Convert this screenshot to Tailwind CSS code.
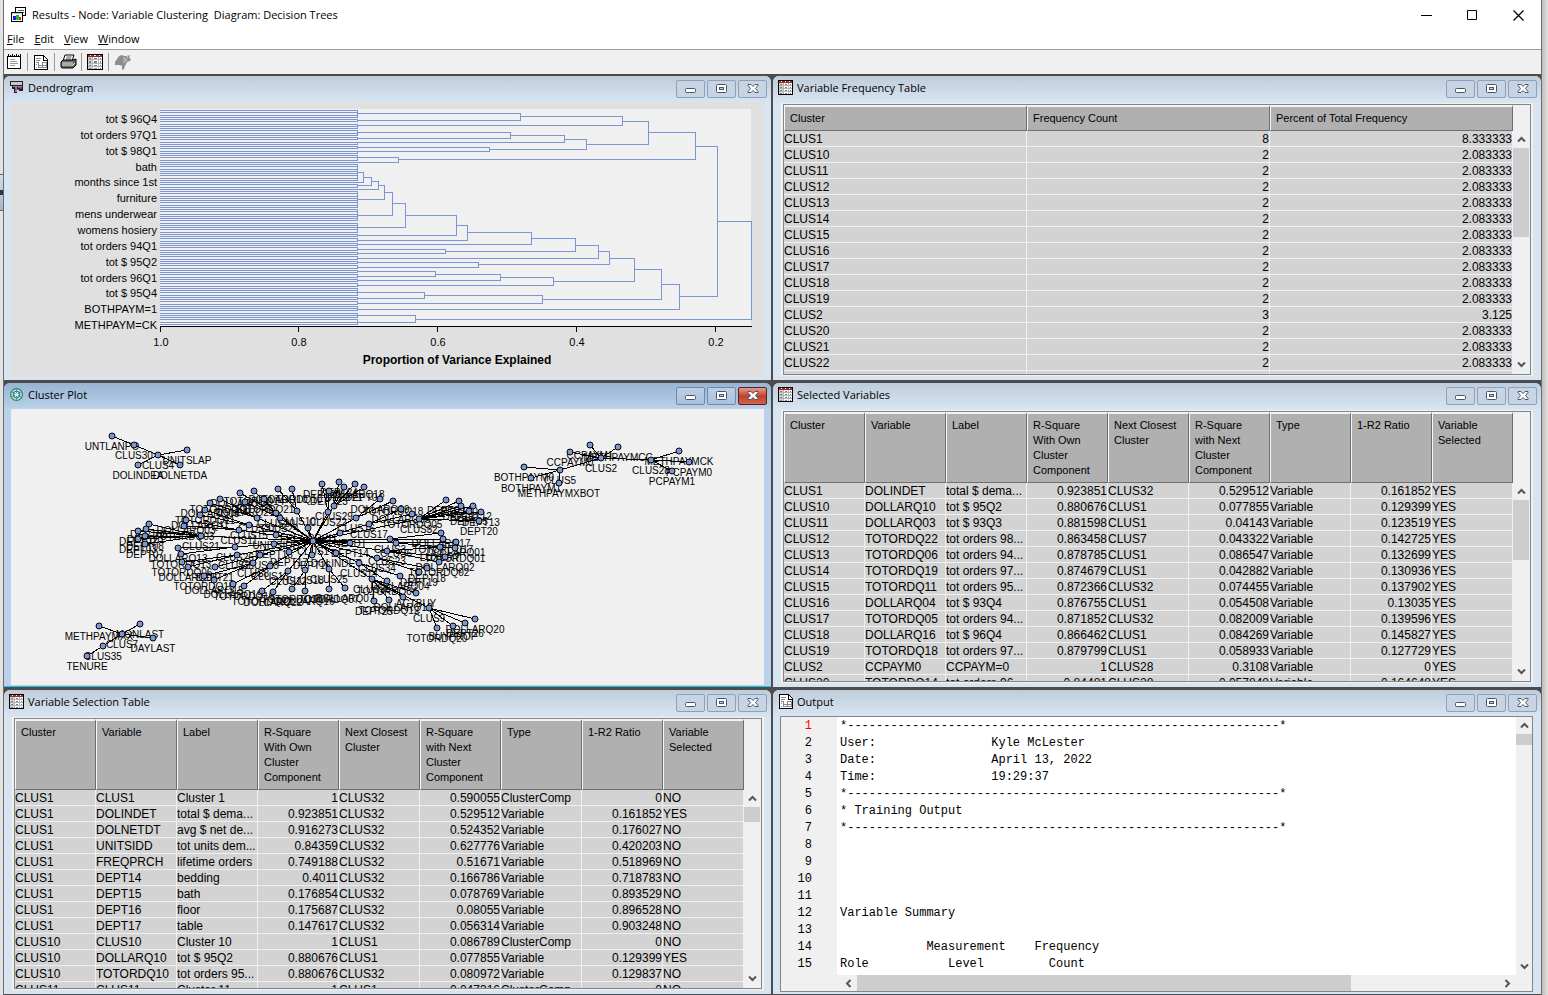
<!DOCTYPE html>
<html lang="en">
<head>
<meta charset="utf-8">
<title>Results - Node: Variable Clustering  Diagram: Decision Trees</title>
<script src="https://cdn.jsdelivr.net/npm/@tailwindcss/browser@4"></script>
</head>
<body class="h-screen overflow-hidden flex bg-[#dcdcdc] text-black font-['Open_Sans','Noto_Sans',sans-serif] text-[11px]">

<svg width="0" height="0" class="hidden" aria-hidden="true">
  <symbol id="i-table" viewBox="0 0 15 15"><g shape-rendering="crispEdges">
    <rect width="15" height="15" fill="#000"/><rect x="1" y="1" width="13" height="13" fill="#fff"/>
    <path d="M1 1h13v2H1z" fill="#a02828"/><path d="M3 1h1v1H3zM7 1h1v1H7zM11 1h1v1h-1z" fill="#fff"/>
    <path d="M1 3h4v11H1z" fill="#d4d4d4"/>
    <path d="M5 3h1v11H5zM10 3h1v11h-1zM1 5h13v1H1zM1 8h13v1H1zM1 11h13v1H1z" fill="#b4b4b4"/>
    <path d="M2 4.500h2M7 4.500h2M12 4.500h1M2 7.500h2M7 7.500h2M12 7.500h1M2 10.500h2M7 10.500h2M12 10.500h1M2 13.500h2M7 13.500h2M12 13.500h1" stroke="#808080"/></g></symbol>
  <symbol id="i-dendro" viewBox="-1 -1 15 15"><g shape-rendering="crispEdges">
    <rect width="13" height="5" fill="#222"/><rect x="1" y="1" width="11" height="3" fill="#c8c8c8"/>
    <path d="M2 5h11v5H9V8H7v4H4V8H2z" fill="#222"/><path d="M3 5h9v1H3zM5 6h2v5H5z" fill="#888"/><path d="M8 6h4v1H8zM7 8h2v1H7zM5 7h1v2H5zM10 7h1v1h-1z" fill="#b030b0"/></g></symbol>
  <symbol id="i-output" viewBox="0 0 14 15"><g shape-rendering="crispEdges">
    <path d="M0 0h10v1h1v1h1v1h1v1h1v11H0z" fill="#000"/><path d="M1 1h8v5h4v8H1z" fill="#fff"/><path d="M10 2h1v1h1v1h1v1h-3z" fill="#fff"/>
    <path d="M2 3.500h5M2 5.500h4M2 7.500h3M8 7.500h5M2 9.500h1M2 12.500h1" stroke="#888"/><path d="M4 8h1v5H4zM8 8h1v5H8zM12 8h1v5h-1zM5 10h7v1H5zM5 12h7v1H5z" fill="#888"/></g></symbol>
  <symbol id="i-cluster" viewBox="0 0 14 14"><circle cx="7" cy="7" r="5.500" fill="#cfe4f2" stroke="#189a30" stroke-width="1.200"/><circle cx="7" cy="7" r="3" fill="none" stroke="#3c62b8"/><path d="M7 2v10M2.500 4.500l9 5M2.500 9.500l9-5" stroke="#3c8a9a" stroke-width=".8"/><circle cx="7" cy="7" r="1.500" fill="#d8e8f8"/></symbol>
  <symbol id="i-min" viewBox="0 0 12 12"><rect x=".5" y="5.500" width="10" height="4" rx="1" fill="#fff" stroke="#4a5468"/></symbol>
  <symbol id="i-max" viewBox="0 0 12 12"><rect x=".5" y="1.500" width="10" height="8" rx="1" fill="#fff" stroke="#4a5468"/><rect x="3.500" y="4.500" width="4" height="2" fill="#c5d1e2" stroke="#4a5468"/></symbol>
  <symbol id="i-close" viewBox="0 0 12 12"><path d="M1 1.500h3l2 2 2-2h3v1L8.500 5.500l2.500 3v1H8l-2-2-2 2H1v-1l2.500-3L1 2.500z" fill="#fff" stroke="#4a5468"/></symbol>
  <symbol id="i-up" viewBox="0 0 9 9"><path d="M1 6.500l3.500-3.500L8 6.500" fill="none" stroke="#555" stroke-width="2"/></symbol>
  <symbol id="i-down" viewBox="0 0 9 9"><path d="M1 2.500L4.500 6 8 2.500" fill="none" stroke="#555" stroke-width="2"/></symbol>
</svg>

<div class="w-[3px] shrink-0 flex flex-col bg-[#e3e3e3]">
  <div class="h-[175px] border-b border-[#666]"></div>
  <div class="h-[36px] bg-linear-to-b from-[#d0deec] to-[#9fb6cd] border-b border-[#666] flex items-center"><span class="w-[3px] h-[5px] bg-[#333]"></span></div>
</div>

<div class="flex-1 min-w-0 flex flex-col border-x border-[#6c6c6c] bg-white">
  <header class="h-[30px] shrink-0 flex items-center">
    <svg class="ml-[7px] w-[16px] h-[16px]" viewBox="0 0 16 16" shape-rendering="crispEdges"><path d="M4 0h11v9H4z" fill="#000"/><path d="M5 1h9v7H5z" fill="#fff"/><path d="M7 3h6M7 5h6" stroke="#555"/><path d="M0 5h12v10H0z" fill="#000"/><path d="M1 6h10v1H1z" fill="#ccc"/><path d="M1 7h10v7H1z" fill="#fff"/><path d="M2 9h3v4H2z" fill="#1818e8"/><path d="M5 8h3v5H5z" fill="#18c030"/><path d="M8 10h2v3H8z" fill="#e02020"/></svg>
    <h1 class="ml-[5px] whitespace-pre">Results - Node: Variable Clustering  Diagram: Decision Trees</h1>
    <div class="ml-auto flex">
      <button aria-label="Minimize" class="w-[46px] h-[28px] flex items-center justify-center"><svg class="w-[11px] h-[11px]" viewBox="0 0 11 11"><path d="M0 5.500h11" stroke="#000"/></svg></button>
      <button aria-label="Maximize" class="w-[46px] h-[28px] flex items-center justify-center"><svg class="w-[11px] h-[11px]" viewBox="0 0 11 11"><path d="M.5.5h9v9H.5z" fill="none" stroke="#000"/></svg></button>
      <button aria-label="Close" class="w-[46px] h-[28px] flex items-center justify-center"><svg class="w-[11px] h-[11px]" viewBox="0 0 11 11"><path d="M.5.5l10 10M10.500.5l-10 10" fill="none" stroke="#000" stroke-width="1.200"/></svg></button>
    </div>
  </header>
  <nav class="h-[20px] shrink-0 flex items-center gap-[10px] pl-[3px] border-b border-[#9a9a9a]">
    <button><u>F</u>ile</button><button><u>E</u>dit</button><button><u>V</u>iew</button><button><u>W</u>indow</button>
  </nav>
  <div class="h-[24px] shrink-0 flex items-center bg-[#f0f0f0] pl-[3px]">
    <button aria-label="Properties" class="w-[20px]"><svg class="w-[15px] h-[16px]" viewBox="0 0 15 16" shape-rendering="crispEdges"><path d="M0 2h14v13H0z" fill="#000"/><path d="M1 3h12v11H1z" fill="#fff"/><path d="M1 0h1v3H1zM3 1h1v2H3zM5 0h1v3H5zM7 1h1v2H7zM9 0h1v3H9zM11 1h1v2h-1zM13 0h1v3h-1z" fill="#000"/><path d="M3 5.500h5M3 7.500h7M3 9.500h8M3 11.500h5" stroke="#999"/></svg></button>
    <span class="w-px h-[18px] bg-[#999] mr-[6px]"></span>
    <button aria-label="Output" class="w-[20px]"><svg class="w-[14px] h-[15px]"><use href="#i-output"/></svg></button>
    <span class="w-px h-[18px] bg-[#999] mr-[5px]"></span>
    <button aria-label="Print" class="w-[21px]"><svg class="w-[17px] h-[16px]" viewBox="0 0 17 16"><path d="M5 1h9l-2 6H3z" fill="#fff" stroke="#000"/><path d="M6.500 3h5M6 5h5" stroke="#555"/><path d="M1 8l2-2h10l3-1v6l-3 3H2l-1-1z" fill="#666" stroke="#000"/><path d="M2 9h11M2 11h11l2-2" fill="none" stroke="#eee"/><path d="M8 11.500h3" stroke="#c8b820"/></svg></button>
    <span class="w-px h-[18px] bg-[#999] mr-[5px]"></span>
    <button aria-label="Table" class="w-[21px]"><svg class="w-[16px] h-[16px]"><use href="#i-table"/></svg></button>
    <span class="w-px h-[18px] bg-[#999] mr-[6px]"></span>
    <button aria-label="Plot" disabled class="w-[20px]"><svg class="w-[16px] h-[16px]" viewBox="0 0 16 16"><path d="M4 2l3-1 2 1 3 0 3-1-1 3 2 1-1 2-3 1-1 2-1 2-1 3-2 1v-4l-2-1-5 0 0-3z" fill="#8e8e8e"/><path d="M8 4h2v3H9v2M11 5l1 2M13 1l-1 3" fill="none" stroke="#d0d0d0"/></svg></button>
  </div>

  <main class="flex-1 min-h-0 grid grid-cols-2 grid-rows-3 gap-x-px gap-y-[3px] pt-[2px] pb-px bg-[#4c4c4e]">

    <section class="win mr-px min-h-0 min-w-0 flex flex-col bg-[#d7e4f2] rounded-t-md overflow-hidden" data-title="Dendrogram" data-icon="#i-dendro">
      <div class="flex-1 min-h-0 mx-[7px] mb-[3px] bg-[#e0e0e0]">
        <svg id="dendro" class="block w-full h-full font-['Liberation_Sans',Arial,sans-serif]" viewBox="11 102 753 275"></svg>
      </div>
    </section>

    <section class="win min-h-0 min-w-0 flex flex-col bg-[#d7e4f2] rounded-t-md overflow-hidden" data-title="Variable Frequency Table" data-icon="#i-table">
      <div id="freq" class="flex-1 min-h-0 flex flex-col mx-[7px] mb-[3px] bg-[#f0f0f0] border border-[#e2e4e6] px-[2px] py-px"></div>
    </section>

    <section class="win mr-px min-h-0 min-w-0 flex flex-col bg-[#b9d1ea] rounded-t-md overflow-hidden border-b border-b-[#22c4dc]" data-title="Cluster Plot" data-icon="#i-cluster" data-active="1">
      <div class="flex-1 min-h-0 mx-[7px] mb-px bg-[#f0f0f0]">
        <svg id="plot" class="block w-full h-full font-['Liberation_Sans',Arial,sans-serif]" viewBox="11 409 753 276"></svg>
      </div>
    </section>

    <section class="win min-h-0 min-w-0 flex flex-col bg-[#d7e4f2] rounded-t-md overflow-hidden" data-title="Selected Variables" data-icon="#i-table">
      <div id="selected" class="flex-1 min-h-0 flex flex-col mx-[7px] mb-[3px] bg-[#f0f0f0] border border-[#e2e4e6] px-[2px] py-px"></div>
    </section>

    <section class="win mr-px min-h-0 min-w-0 flex flex-col bg-[#d7e4f2] rounded-t-md overflow-hidden" data-title="Variable Selection Table" data-icon="#i-table">
      <div id="selection" class="flex-1 min-h-0 flex flex-col ml-[7px] mr-[6px] mb-[3px] bg-[#f0f0f0] border border-[#e2e4e6] px-[2px] py-px"></div>
    </section>

    <section class="win min-h-0 min-w-0 flex flex-col bg-[#d7e4f2] rounded-t-md overflow-hidden" data-title="Output" data-icon="#i-output">
      <div class="flex-1 min-h-0 flex ml-[7px] mr-[8px] mb-[2px] bg-[#f0f0f0] border border-[#7f868f]">
        <pre class="w-[56px] shrink-0 pt-px pr-[25px] text-right text-[12px] leading-[17px] font-['Liberation_Mono',monospace]"><span class="text-[#ff0000]">1</span>
2
3
4
5
6
7
8
9
10
11
12
13
14
15</pre>
        <div class="flex-1 min-w-0 flex flex-col">
          <pre class="flex-1 min-h-0 overflow-hidden bg-white pt-px pl-[3px] text-[12px] leading-[17px] font-['Liberation_Mono',monospace]">*------------------------------------------------------------*
User:                Kyle McLester
Date:                April 13, 2022
Time:                19:29:37
*------------------------------------------------------------*
* Training Output
*------------------------------------------------------------*




Variable Summary

            Measurement    Frequency
Role           Level         Count</pre>
          <div class="h-[16px] shrink-0 flex items-center ml-[3px]">
            <button aria-label="Scroll left" class="w-[17px] flex justify-center"><svg class="w-[9px] h-[9px]" viewBox="0 0 9 9"><path d="M6.500 1L3 4.500 6.500 8" fill="none" stroke="#555" stroke-width="2"/></svg></button>
            <div class="flex-1 h-full"><div class="w-[77%] h-full bg-[#cdcdcd]"></div></div>
            <button aria-label="Scroll right" class="w-[17px] flex justify-center"><svg class="w-[9px] h-[9px]" viewBox="0 0 9 9"><path d="M2.500 1L6 4.500 2.500 8" fill="none" stroke="#555" stroke-width="2"/></svg></button>
          </div>
        </div>
        <div class="w-[16px] shrink-0 flex flex-col pb-[16px]">
          <button aria-label="Scroll up" class="h-[17px] flex justify-center items-center"><svg class="w-[9px] h-[9px]"><use href="#i-up"/></svg></button>
          <div class="flex-1"><div class="h-[11px] bg-[#cdcdcd]"></div></div>
          <button aria-label="Scroll down" class="h-[17px] flex justify-center items-center"><svg class="w-[9px] h-[9px]"><use href="#i-down"/></svg></button>
        </div>
      </div>
    </section>
  </main>
</div>
<div class="w-[6px] shrink-0 bg-linear-to-r from-[#bdbdbd] to-[#e0e0e0]"></div>

<script>
// Title bars
document.querySelectorAll('.win').forEach(w => {
  const on = w.dataset.active;
  const bar = on ? 'bg-linear-to-b from-[#98b4d2] to-[#b9d1ea]' : 'bg-linear-to-b from-[#bfcddb] to-[#d7e4f2]';
  const b = on ? 'bg-linear-to-b from-[#bcd0e6] to-[#a8c2de] border-[#6f87a8]' : 'bg-[#c6d4e4] border-[#8fa0bc]';
  const c = on ? 'bg-linear-to-b from-[#e09c8c] via-[#c0402c] to-[#d06450] border-[#5a2020]' : b;
  const btn = (n, i, k) => `<button aria-label="${n}" class="w-[29px] h-[18px] border rounded-[2px] flex items-center justify-center ${k}"><svg class="w-[12px] h-[12px]"><use href="${i}"/></svg></button>`;
  w.insertAdjacentHTML('afterbegin', `<div class="h-[26px] shrink-0 flex ${bar}">
    <svg class="ml-[5px] mt-[4px] w-[15px] h-[15px] shrink-0"><use href="${w.dataset.icon}"/></svg>
    <h2 class="ml-[4px] mt-[3px] leading-[18px]">${w.dataset.title}</h2>
    <div class="ml-auto mr-[4px] mt-[4px] flex gap-[2px]">${btn('Minimize', '#i-min', b)}${btn('Restore', '#i-max', b)}${btn('Close', '#i-close', c)}</div></div>`);
});

// Data tables
function grid(id, heads, rows, right, tall, thumb, label) {
  const hh = tall ? 'h-[71px]' : 'h-[26px]', sp = tall ? 'pt-[71px]' : 'pt-[26px]';
  document.getElementById(id).innerHTML = `<div class="flex-1 min-h-0 flex border border-[#7f868f] font-['Liberation_Sans',Arial,sans-serif]">
   <div class="flex-1 min-w-0 overflow-hidden"><table aria-label="${label}" class="w-full table-fixed border-separate border-spacing-0">
   <thead><tr>${heads.map(h => `<th class="${hh} pl-[5px] pt-[4px] align-top text-left text-[11px] leading-[15px] font-normal bg-[#b0b0b0] border border-t-2 border-t-[#f4f4f4] border-l-[#f8f8f8] border-r-[#6e6e6e] border-b-[#6e6e6e] whitespace-nowrap">${h}</th>`).join('')}</tr></thead>
   <tbody>${rows.map(r => `<tr>${r.map((c, i) => `<td class="h-[16px] p-0 pt-[2px] leading-[13px] text-[12px] bg-[#d3d3d3] border-r border-b border-[#f0f0f0] whitespace-nowrap ${right.includes(i) ? 'text-right' : 'text-left'}">${c}</td>`).join('')}</tr>`).join('')}</tbody></table></div>
   <div class="w-[17px] shrink-0 pr-px flex flex-col ${sp}">
    <button aria-label="Scroll up" class="h-[17px] flex justify-center items-center"><svg class="w-[9px] h-[9px]"><use href="#i-up"/></svg></button>
    <div class="flex-1"><div class="bg-[#cdcdcd]" style="height:${thumb}%"></div></div>
    <button aria-label="Scroll down" class="h-[19px] flex justify-center items-center"><svg class="w-[9px] h-[9px]"><use href="#i-down"/></svg></button>
   </div></div>`;
}
grid('freq', ['Cluster', 'Frequency Count', 'Percent of Total Frequency'],
  [1,10,11,12,13,14,15,16,17,18,19,2,20,21,22,23].map(n => ['CLUS' + n, n === 1 ? 8 : n === 2 ? 3 : 2, n === 1 ? '8.333333' : n === 2 ? '3.125' : '2.083333']),
  [1, 2], false, 43, 'Variable Frequency Table');
const heads = ['Cluster', 'Variable', 'Label', 'R-Square<br>With Own<br>Cluster<br>Component', 'Next Closest<br>Cluster', 'R-Square<br>with Next<br>Cluster<br>Component', 'Type', '1-R2 Ratio', 'Variable<br>Selected'];
const parse = s => s.trim().split('\n').map(l => l.split('|'));
grid('selected', heads, parse(`
CLUS1|DOLINDET|total $ dema...|0.923851|CLUS32|0.529512|Variable|0.161852|YES
CLUS10|DOLLARQ10|tot $ 95Q2|0.880676|CLUS1|0.077855|Variable|0.129399|YES
CLUS11|DOLLARQ03|tot $ 93Q3|0.881598|CLUS1|0.04143|Variable|0.123519|YES
CLUS12|TOTORDQ22|tot orders 98...|0.863458|CLUS7|0.043322|Variable|0.142725|YES
CLUS13|TOTORDQ06|tot orders 94...|0.878785|CLUS1|0.086547|Variable|0.132699|YES
CLUS14|TOTORDQ19|tot orders 97...|0.874679|CLUS1|0.042882|Variable|0.130936|YES
CLUS15|TOTORDQ11|tot orders 95...|0.872366|CLUS32|0.074455|Variable|0.137902|YES
CLUS16|DOLLARQ04|tot $ 93Q4|0.876755|CLUS1|0.054508|Variable|0.13035|YES
CLUS17|TOTORDQ05|tot orders 94...|0.871852|CLUS32|0.082009|Variable|0.139596|YES
CLUS18|DOLLARQ16|tot $ 96Q4|0.866462|CLUS1|0.084269|Variable|0.145827|YES
CLUS19|TOTORDQ18|tot orders 97...|0.879799|CLUS1|0.058933|Variable|0.127729|YES
CLUS2|CCPAYM0|CCPAYM=0|1|CLUS28|0.3108|Variable|0|YES
CLUS20|TOTORDQ14|tot orders 96...|0.84481|CLUS28|0.057848|Variable|0.164648|YES`), [3, 5, 7], true, 37, 'Selected Variables');
grid('selection', heads, parse(`
CLUS1|CLUS1|Cluster 1|1|CLUS32|0.590055|ClusterComp|0|NO
CLUS1|DOLINDET|total $ dema...|0.923851|CLUS32|0.529512|Variable|0.161852|YES
CLUS1|DOLNETDT|avg $ net de...|0.916273|CLUS32|0.524352|Variable|0.176027|NO
CLUS1|UNITSIDD|tot units dem...|0.84359|CLUS32|0.627776|Variable|0.420203|NO
CLUS1|FREQPRCH|lifetime orders|0.749188|CLUS32|0.51671|Variable|0.518969|NO
CLUS1|DEPT14|bedding|0.4011|CLUS32|0.166786|Variable|0.718783|NO
CLUS1|DEPT15|bath|0.176854|CLUS32|0.078769|Variable|0.893529|NO
CLUS1|DEPT16|floor|0.175687|CLUS32|0.08055|Variable|0.896528|NO
CLUS1|DEPT17|table|0.147617|CLUS32|0.056314|Variable|0.903248|NO
CLUS10|CLUS10|Cluster 10|1|CLUS1|0.086789|ClusterComp|0|NO
CLUS10|DOLLARQ10|tot $ 95Q2|0.880676|CLUS1|0.077855|Variable|0.129399|YES
CLUS10|TOTORDQ10|tot orders 95...|0.880676|CLUS32|0.080972|Variable|0.129837|NO
CLUS11|CLUS11|Cluster 11|1|CLUS1|0.047316|ClusterComp|0|NO`), [3, 5, 7], true, 9, 'Variable Selection Table');

// Dendrogram: 96 leaves joined into clusters, then merged pairwise
const leafY = i => Math.round(110 + i * 2.2526);
let d = '';
for (let i = 0; i < 96; i++) d += `M160 ${leafY(i)}.5H358`;
[[0,3],[4,5],[6,8],[9,11],[12,13],[14,15],[16,17],[18,19],[20,22],[24,31],[33,34],[36,43],[44,49],[50,54],[55,56],[57,58],[59,60],[61,62],[63,64],[65,66],[67,68],[69,70],[71,72],[73,74],[75,76],[77,78],[79,82],[83,84],[85,86],[87,89],[90,92],[93,95]]
  .forEach(([a, b]) => d += `M357.5 ${leafY(a)}V${leafY(b) + 1}`);
[[520,113,357,120,357],[622,116,520,125,357],[510,132,357,138,357],[564,135,510,142,357],[489,147,357,151,357],[586,139,564,149,489],[648,121,622,144,586],[398,157,357,162,357],[695,132,648,159,398],
 [363,172,357,182,357],[371,177,363,185,357],[378,181,371,189,357],[384,185,378,199,357],[392,192,384,215,357],[405,203,392,227,357],[456,215,405,235,357],[467,225,456,240,357],[531,232,467,244,357],[445,249,357,253,357],[575,238,531,251,445],[598,245,575,258,357],[478,262,357,267,357],[609,251,598,264,478],
 [435,271,357,276,357],[500,274,435,280,357],[553,277,500,285,357],[634,258,609,281,553],[424,292,357,298,357],[542,295,424,303,357],[661,269,634,299,542],[679,284,661,309,357],[717,146,695,296,679],[415,315,357,322,357],[751,221,717,319,415]]
  .forEach(([x, y1, x1, y2, x2]) => d += `M${x1} ${y1}.5H${x}.5V${y2}.5H${x2}`);
const names = ['tot $ 96Q4','tot orders 97Q1','tot $ 98Q1','bath','months since 1st','furniture','mens underwear','womens hosiery','tot orders 94Q1','tot $ 95Q2','tot orders 96Q1','tot $ 95Q4','BOTHPAYM=1','METHPAYM=CK'];
document.getElementById('dendro').innerHTML = `<rect x="160" y="109" width="591" height="217" fill="#f0f0f0"/>
 <path d="${d}" fill="none" stroke="#7b96d2" shape-rendering="crispEdges"/>
 <path d="M160 326.5H752${[160,298,437,576,715].map(x => `M${x}.5 326V332`).join('')}" stroke="#000" fill="none" shape-rendering="crispEdges"/>
 <g font-size="11">${names.map((n, i) => `<text x="157" y="${Math.round(123 + i * 15.85)}" text-anchor="end">${n}</text>`).join('')}
 ${['1.0','0.8','0.6','0.4','0.2'].map((n, i) => `<text x="${Math.round(160.5 + i * 138.75)}" y="346" text-anchor="middle">${n}</text>`).join('')}</g>
 <text x="457" y="364" font-size="12" font-weight="700" text-anchor="middle">Proportion of Variance Explained</text>`;

// Cluster plot: label, x, y, parent
const nodes = `CLUS4 158 455 -
CLUS30 134 445 CLUS4
UNTLANPO 112 436 CLUS30
UNITSLAP 187 450 CLUS4
DOLINDEA 138 465 CLUS4
DOLNETDA 180 465 CLUS4
CLUS7 122 634 -
METHPAYMXX 99 626 CLUS7
MONLAST 140 624 CLUS7
DAYLAST 153 638 CLUS7
CLUS35 103 646 CLUS7
TENURE 87 656 CLUS35
CLUS2 601 458 -
CLUS5 560 470 CLUS2
BOTHPAYM0 524 467 CLUS5
BOTHPAYM1 531 478 CLUS5
METHPAYMXBOT 559 483 CLUS5
CCPAYM0 570 452 CLUS2
CCPAYM1 590 445 CLUS2
METHPAYMCC 618 447 CLUS2
CLUS28 651 460 CLUS2
METHPAYMCK 679 451 CLUS28
PCPAYM0 689 462 CLUS28
PCPAYM1 672 471 CLUS28
CLUS1 313 541 -
CLUS21 201 536 CLUS1
DEPT06 149 524 CLUS21
DEPT01 146 529 CLUS21
DEPT02 138 531 CLUS21
DEPT08 145 536 CLUS21
DEPT03 138 539 CLUS21
DEPT07 145 544 CLUS21
CLUS11 239 530 CLUS1
TOTORDQ03 184 526 CLUS11
DOLLARQ03 186 520 CLUS11
CLUS15 249 525 CLUS1
DOLLARQ11 200 515 CLUS15
TOTORDQ11 205 510 CLUS15
CLUS31 257 518 CLUS1
DOLLARQ08 210 503 CLUS31
TOTORDQ08 220 499 CLUS31
CLUS20 276 513 CLUS1
DOLLARQ14 240 493 CLUS20
TOTORDQ14 254 491 CLUS20
CLUS24 280 518 CLUS1
DOLLARQ21 245 502 CLUS24
TOTORDQ21 264 499 CLUS24
CLUS10 297 511 CLUS1
DOLLARQ10 278 489 CLUS10
TOTORDQ10 292 489 CLUS10
CLUS22 328 512 CLUS1
DEPT22 322 484 CLUS22
DEPT23 329 491 CLUS22
CLUS29 334 506 CLUS1
DEPT24 339 482 CLUS29
DEPT21 344 487 CLUS29
DOLLARQ18 355 484 CLUS29
DEPT04 364 487 CLUS29
FREQPRCH 308 528 CLUS1
CLUS16 356 518 CLUS1
DOLLARQ09 380 499 CLUS16
TOTORDQ18 393 501 CLUS16
CLUS17 369 524 CLUS1
DOLLARQ05 401 509 CLUS17
TOTORDQ05 412 514 CLUS17
CLUS32 419 519 CLUS1
DEPT09 446 500 CLUS32
DEPT10 459 501 CLUS32
DEPT11 461 506 CLUS32
DEPT12 473 506 CLUS32
DEPT05 469 511 CLUS32
DEPT13 481 512 CLUS32
DEPT20 479 521 CLUS32
UNITSIDD 276 535 CLUS1
DOLNETDT 340 533 CLUS1
DEPT14 350 543 CLUS1
DOLINDET 336 553 CLUS1
DEPT15 274 544 CLUS1
DEPT17 289 552 CLUS1
DEPT16 312 555 CLUS1
CLUS26 235 547 CLUS1
DOLLARQ13 178 548 CLUS26
TOTORDQ13 181 554 CLUS26
CLUS27 237 555 CLUS1
TOTORDQ06 182 562 CLUS27
DOLLARQ06 188 567 CLUS27
CLUS33 260 555 CLUS1
CLUS8 253 563 CLUS33
DEPT21 215 567 CLUS33
TOTORDQ15 204 576 CLUS8
DOLLARQ15 214 580 CLUS8
CLUS13 270 566 CLUS1
DOLLARQ19 233 584 CLUS13
TOTORDQ19 244 586 CLUS13
CLUS12 288 571 CLUS1
TOTORDQ22 262 591 CLUS12
DOLLARQ22 273 592 CLUS12
CLUS18 305 570 CLUS1
TOTORDQ16 292 589 CLUS18
DOLLARQ16 305 591 CLUS18
CLUS25 329 569 CLUS1
TOTORDQ07 329 589 CLUS25
DOLLARQ07 345 588 CLUS25
CLUS3 390 539 CLUS1
DOLLARQ17 441 533 CLUS3
TOTORDQ17 443 539 CLUS3
CLUS6 396 543 CLUS1
DOLLARQ01 456 542 CLUS6
TOTORDQ01 455 548 CLUS6
CLUS23 387 551 CLUS1
LUXURY 440 547 CLUS23
DOLLARQ02 445 557 CLUS23
TOTORDQ02 439 562 CLUS23
CLUS34 377 558 CLUS1
DEPT18 427 568 CLUS34
DEPT19 419 572 CLUS34
CLUS14 359 563 CLUS1
DOLLARQ04 400 576 CLUS14
TOTORDQ04 387 581 CLUS14
CLUS36 372 579 CLUS1
DEPT25 374 601 CLUS36
TOTORDQ12 389 600 CLUS36
DOLLARQ12 403 597 CLUS36
ACTBUY 416 593 CLUS36
CLUS9 429 608 CLUS36
TOTORDQ20 437 628 CLUS9
BUYPROP 453 626 CLUS9
DEPT26 465 623 CLUS9
DOLLARQ20 475 619 CLUS9`.split('\n').map(l => l.split(' '));
const at = Object.fromEntries(nodes.map(n => [n[0], n]));
const joined = nodes.filter(n => n[3] !== '-');
document.getElementById('plot').innerHTML =
  `<path d="${joined.map(n => `M${n[1]} ${n[2]}L${at[n[3]][1]} ${at[n[3]][2]}`).join('')}" stroke="#000" fill="none" shape-rendering="crispEdges"/>` +
  `<g font-size="10" text-anchor="middle">${nodes.map(n => `<text x="${n[1]}" y="${+n[2] + 14}">${n[0]}</text>`).join('')}</g>` +
  `<g fill="#7b96d2" stroke="#000">${nodes.map(n => `<circle cx="${n[1]}" cy="${n[2]}" r="3"/>`).join('')}</g>`;
</script>
</body>
</html>
